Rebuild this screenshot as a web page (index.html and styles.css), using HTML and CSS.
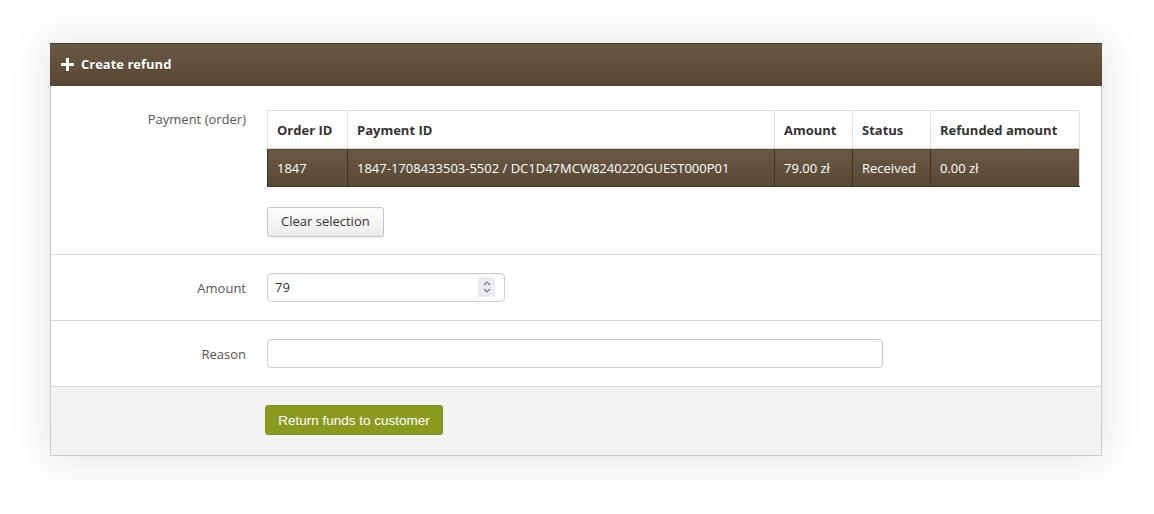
FILE: index.html
```html
<!doctype html>
<html lang="en">
<head>
    <meta charset="UTF-8">
    <title>Create refund</title>
    <link rel="stylesheet" href="styles.css">
</head>
<body>
<div class="panel">
    <div class="panel-head">
        <svg class="plus-icon" width="13" height="13" viewBox="0 0 13 13">
            <path d="M5 0h3v5h5v3h-5v5h-3v-5h-5v-3h5z" fill="#fff"/>
        </svg>
        <span>Create refund</span>
    </div>
    <div class="form-row form-row-top">
        <label class="form-label">Payment (order)</label>
        <div class="form-control">
            <table class="pay-table">
                <colgroup>
                    <col style="width: 80px">
                    <col style="width: 427px">
                    <col style="width: 78px">
                    <col style="width: 78px">
                    <col style="width: 149px">
                </colgroup>
                <thead>
                <tr>
                    <th>Order ID</th>
                    <th>Payment ID</th>
                    <th>Amount</th>
                    <th>Status</th>
                    <th>Refunded amount</th>
                </tr>
                </thead>
                <tbody>
                <tr class="selected">
                    <td>1847</td>
                    <td>1847-1708433503-5502 / DC1D47MCW8240220GUEST000P01</td>
                    <td>79.00 zł</td>
                    <td>Received</td>
                    <td>0.00 zł</td>
                </tr>
                </tbody>
            </table>
            <button class="btn-light">Clear selection</button>
        </div>
    </div>
    <div class="form-row">
        <label class="form-label">Amount</label>
        <div class="form-control">
            <div class="number-box">
                <input class="input input-amount" type="text" value="79">
                <span class="spinner">
                    <svg width="10" height="14" viewBox="0 0 10 14">
                        <path d="M2 5l3-3 3 3M2 9l3 3 3-3" fill="none" stroke="#777" stroke-width="1.2"/>
                    </svg>
                </span>
            </div>
        </div>
    </div>
    <div class="form-row">
        <label class="form-label">Reason</label>
        <div class="form-control">
            <input class="input input-reason" type="text" value="">
        </div>
    </div>
    <div class="form-actions">
        <button class="btn-green">Return funds to customer</button>
    </div>
</div>
</body>
</html>
```

FILE: styles.css
```css
html, body {
    margin: 0;
    background: #fff;
}
body {
    min-height: 514px;
    box-sizing: border-box;
    padding: 43px 52px 58px 50px;
    font-family: "Open Sans", "DejaVu Sans", sans-serif;
    font-size: 13px;
    color: #333;
}
.panel {
    border: 1px solid #cfcac4;
    border-top: none;
    background: #fff;
    box-shadow: 0 0 40px rgba(0, 0, 0, 0.13);
}
.panel-head {
    display: flex;
    align-items: center;
    gap: 7px;
    height: 43px;
    padding: 0 11px 2px;
    margin: 0 -1px;
    background: linear-gradient(#6a5944, #574733);
    border-top: 1px solid #4a3c2b;
    box-sizing: border-box;
    color: #fff;
    font-weight: 700;
    text-shadow: 0 1px 1px rgba(0, 0, 0, 0.3);
}
.form-row {
    display: flex;
    align-items: center;
    padding: 18px 0;
    border-bottom: 1px solid #d8d8d8;
}
.form-row-top {
    align-items: flex-start;
    padding: 24px 0 17px;
}
.form-label {
    width: 195px;
    margin-right: 21px;
    text-align: right;
    color: #555;
    line-height: 16px;
}
.form-row-top .form-label {
    padding-top: 1px;
}
.pay-table {
    table-layout: fixed;
    width: 812px;
    border-collapse: collapse;
    border: 1px solid #e0e0e0;
}
.pay-table th,
.pay-table td {
    height: 37px;
    padding: 0 9px;
    text-align: left;
    white-space: nowrap;
}
.pay-table th {
    font-weight: 700;
    color: #333;
    border-left: 1px solid #e0e0e0;
    border-bottom: 1px solid #d0ccc6;
}
.pay-table tr.selected td {
    background: linear-gradient(#6a5944, #584834);
    color: #fff;
    border-left: 1px solid #3e3224;
    border-bottom: 1px solid #3e3224;
}
.btn-light {
    display: block;
    margin-top: 20px;
    height: 30px;
    padding: 0 13px 2px;
    font-family: "Open Sans", "DejaVu Sans", sans-serif;
    font-size: 13px;
    color: #333;
    background: linear-gradient(#fff, #ebebeb);
    border: 1px solid #c6c6c6;
    border-radius: 3px;
    box-shadow: 0 1px 1px rgba(0, 0, 0, 0.05);
}
.number-box {
    position: relative;
    width: 238px;
}
.input {
    display: block;
    box-sizing: border-box;
    height: 29px;
    padding: 0 7px 1px;
    font-family: "Open Sans", "DejaVu Sans", sans-serif;
    font-size: 13px;
    color: #333;
    background: #fff;
    border: 1px solid #cdcdcd;
    border-radius: 4px;
    box-shadow: inset 0 1px 2px rgba(0, 0, 0, 0.06);
    outline: none;
}
.input-amount {
    width: 238px;
}
.input-reason {
    width: 616px;
}
.spinner {
    position: absolute;
    right: 10px;
    top: 4px;
    width: 17px;
    height: 20px;
    display: flex;
    align-items: center;
    justify-content: center;
    background: #ececf0;
}
.form-actions {
    padding: 18px 0 20px 214px;
    background: #f3f3f3;
}
.btn-green {
    display: block;
    width: 178px;
    height: 30px;
    padding-bottom: 1px;
    font-family: "Liberation Sans", Arial, sans-serif;
    font-size: 13.5px;
    color: #fff;
    background: #8a9a1f;
    border: 1px solid #7f8e1b;
    border-radius: 3px;
}
```
